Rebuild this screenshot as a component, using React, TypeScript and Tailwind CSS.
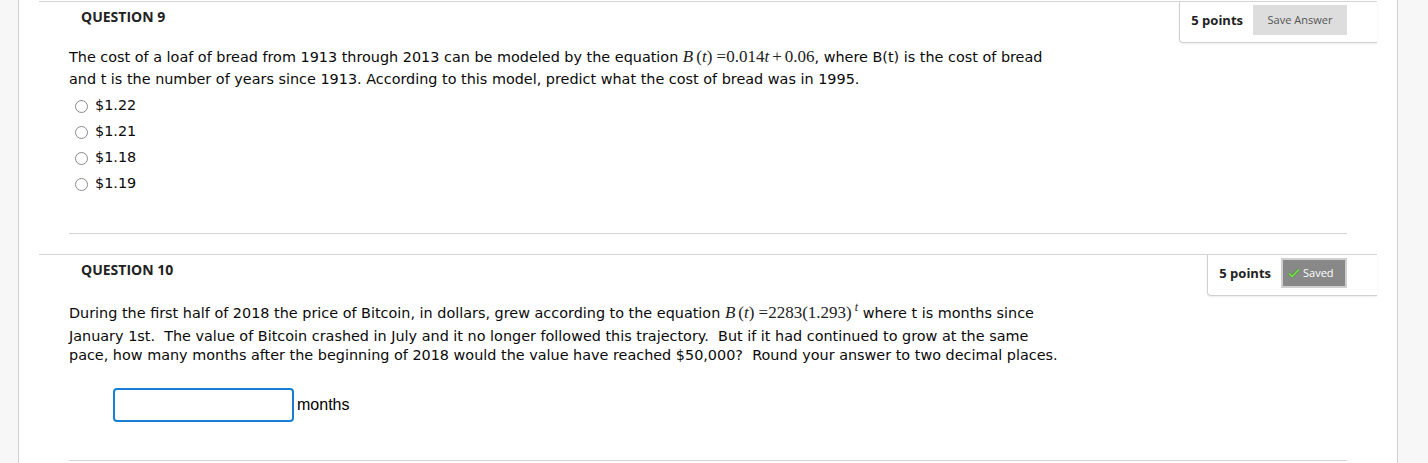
import React from "react";

function PointsBox({ saved }: { saved?: boolean }) {
  return (
    <div className="flex items-start gap-[10px] h-[41px] pt-[3px] pl-[11px] pr-[30px] border-l border-b border-[#d0d0d0] rounded-bl-[4px] shadow-[0_1px_2px_rgba(0,0,0,0.08)] bg-white">
      <span className="font-['Open_Sans'] font-bold text-[13px] text-[#222] leading-[30px]">5 points</span>
      {saved ? (
        <div className="flex items-center gap-[3px] h-[30px] w-[66px] pl-[5px] bg-[#888888] border-2 border-[#cfcfcf] text-white font-['Open_Sans'] text-[11px]">
          <svg width="12" height="10" viewBox="0 0 12 10">
            <path d="M1 5.5 L4.2 8.5 L11 1.5" stroke="#4a9d2c" strokeWidth="2.6" fill="none" />
            <path d="M1 5.5 L4.2 8.5 L11 1.5" stroke="#7ee05a" strokeWidth="1.3" fill="none" />
          </svg>
          <span>Saved</span>
        </div>
      ) : (
        <div className="flex items-center justify-center h-[30px] w-[94px] bg-[#dddddd] text-[#555] font-['Open_Sans'] text-[11px]">
          Save Answer
        </div>
      )}
    </div>
  );
}

const serif = "font-['Liberation_Serif'] text-[17px] text-[#222]";

export default function App() {
  return (
    <div className="flex w-[1428px] h-[463px] overflow-hidden bg-white">
      <div className="w-[19px] shrink-0 bg-[#f7f7f7] border-r border-[#cfcfcf]" />
      <div className="flex-1 pt-[1px] px-[20px] font-['DejaVu_Sans'] text-[14.4px] text-[#0a0a0a]">
        {/* Question 9 */}
        <div className="border-t border-[#d5d5d5]">
          <div className="flex justify-between items-start">
            <div className="pl-[42px] pt-[4px] font-['Open_Sans'] font-bold text-[14px] text-[#222]">QUESTION 9</div>
            <PointsBox />
          </div>
          <div className="mx-[30px] pt-[2px] pb-[36px] border-b border-[#d5d5d5]">
            <div className="h-[23px] leading-[23px] whitespace-nowrap">
              The cost of a loaf of bread from 1913 through 2013 can be modeled by the equation{" "}
              <span className={serif}>
                <i>B</i>
                <span className="ml-[3px]">(<i>t</i>)</span> =0.014<i>t</i>
                <span className="mx-[3px]">+</span>0.06
              </span>
              , where B(t) is the cost of bread
            </div>
            <div className="h-[23px] leading-[23px] whitespace-nowrap">
              and t is the number of years since 1913. According to this model, predict what the cost of bread was in 1995.
            </div>
            <div className="flex flex-col pl-[6px] pt-[2px]">
              {["$1.22", "$1.21", "$1.18", "$1.19"].map((v) => (
                <label key={v} className="flex items-center h-[26px] gap-[7px]">
                  <span className="w-[13px] h-[13px] rounded-full border border-[#8a8a8a] bg-white" />
                  <span>{v}</span>
                </label>
              ))}
            </div>
          </div>
        </div>
        {/* Question 10 */}
        <div className="border-t border-[#d5d5d5] mt-[20px]">
          <div className="flex justify-between items-start">
            <div className="pl-[42px] pt-[4px] font-['Open_Sans'] font-bold text-[14px] text-[#222]">QUESTION 10</div>
            <PointsBox saved />
          </div>
          <div className="mx-[30px] pt-[4px] pb-[38px] border-b border-[#d5d5d5]">
            <div className="h-[27px] leading-[26px] whitespace-nowrap">
              During the first half of 2018 the price of Bitcoin, in dollars, grew according to the equation{" "}
              <span className={serif}>
                <i>B</i>
                <span className="ml-[3px]">(<i>t</i>)</span> =2283(1.293)
                <span className="relative top-[-7px] ml-[3px] text-[12px]"><i>t</i></span>
              </span>{" "}
              where t is months since
            </div>
            <div className="h-[19px] leading-[19px] whitespace-nowrap">
              January 1st.&nbsp; The value of Bitcoin crashed in July and it no longer followed this trajectory.&nbsp; But if it had continued to grow at the same
            </div>
            <div className="h-[19px] leading-[19px] whitespace-nowrap">
              pace, how many months after the beginning of 2018 would the value have reached $50,000?&nbsp; Round your answer to two decimal places.
            </div>
            <div className="flex items-center pl-[44px] mt-[23px]">
              <div className="w-[181px] h-[34px] border-2 border-[#1a7fd4] rounded-[4px] bg-white" />
              <span className="ml-[3px] font-['Liberation_Sans'] text-[16px] text-black">months</span>
            </div>
          </div>
        </div>
      </div>
      <div className="w-[31px] shrink-0 bg-[#f7f7f7] border-l border-[#cfcfcf]" />
    </div>
  );
}
